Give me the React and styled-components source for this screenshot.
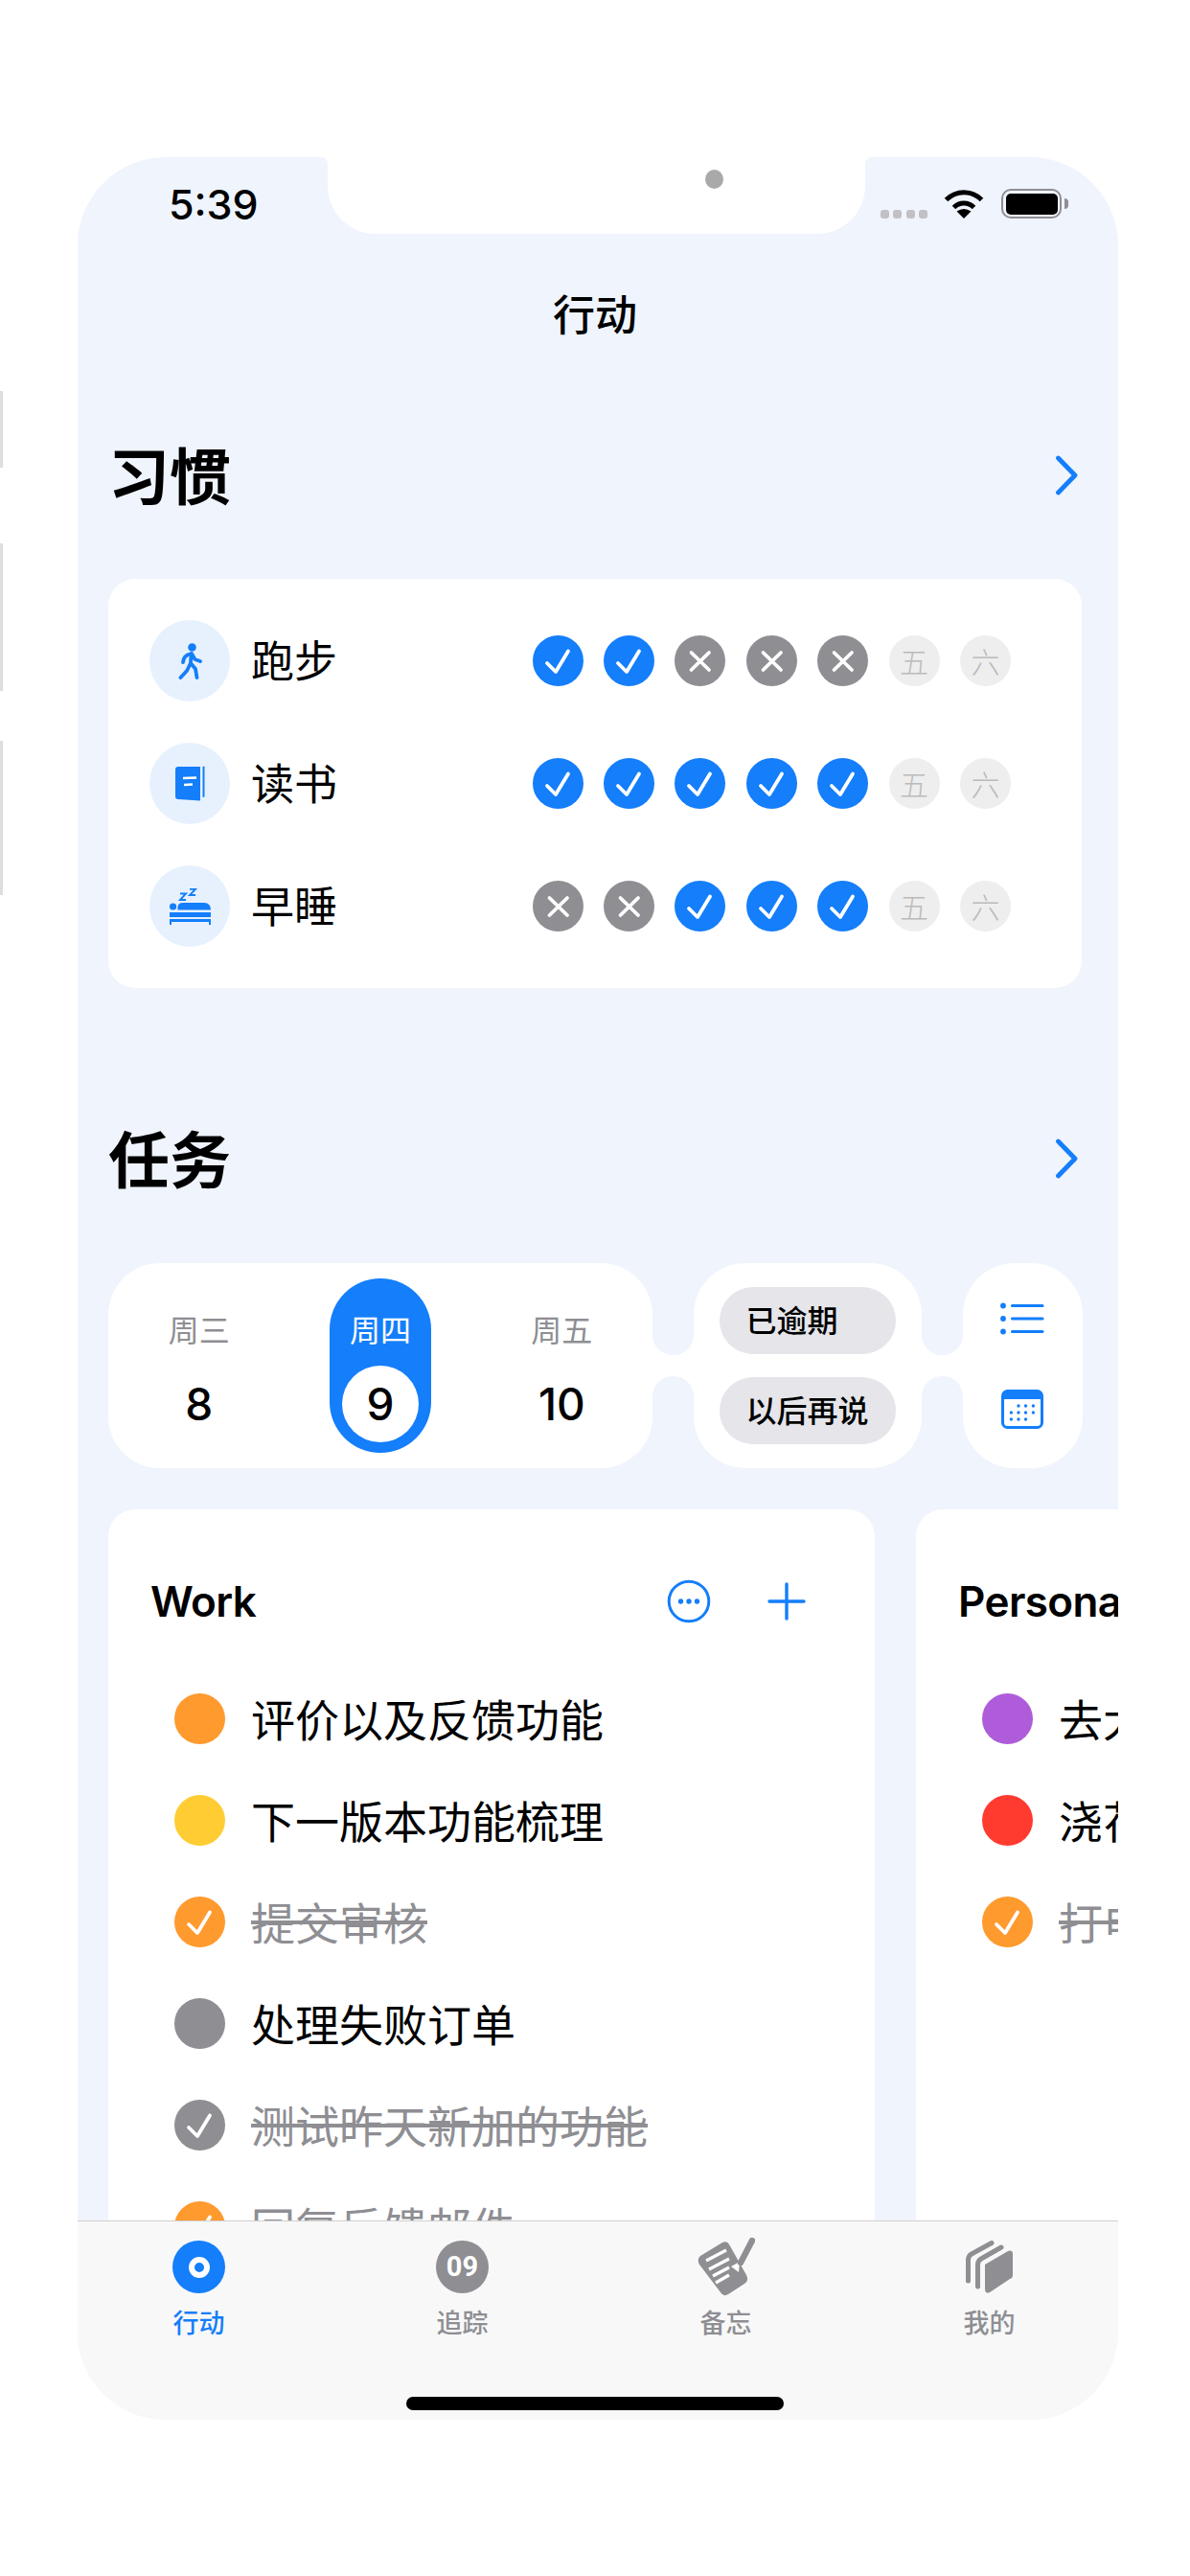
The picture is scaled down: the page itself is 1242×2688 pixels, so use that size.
import React from 'react'
import styled, { createGlobalStyle } from 'styled-components'

const BLUE = '#147EFB'
const GRAY = '#8E8E93'
const BG = '#EFF4FD'

const GlobalStyle = createGlobalStyle`
  html, body {
    margin: 0;
    padding: 0;
    background: #fff;
  }
  body {
    font-family: Inter, "Noto Sans CJK SC", sans-serif;
    color: #000;
  }
  * { box-sizing: border-box; }
`

const Page = styled.div`
  display: flex;
  width: 1242px;
  height: 2688px;
  overflow: hidden;
  background: #fff;
`

const Rail = styled.div`
  width: 81px;
  flex-shrink: 0;
  padding-top: 408px;
  display: flex;
  flex-direction: column;
`

const SideButton = styled.div`
  width: 3px;
  height: ${p => p.$h}px;
  margin-bottom: ${p => p.$gap}px;
  background: #dedede;
`

const Phone = styled.div`
  margin-top: 164px;
  width: 1086px;
  height: 2361px;
  border-radius: 92px;
  overflow: hidden;
  background: ${BG};
  display: flex;
  flex-direction: column;
`

const StatusBar = styled.div`
  height: 80px;
  flex-shrink: 0;
  display: flex;
`

const StatusLeft = styled.div`
  width: 261px;
  padding: 31px 0 0 95px;
  font: 500 43px/36px Inter, sans-serif;
`

const Notch = styled.div`
  position: relative;
  width: 561px;
  height: 80px;
  padding: 13px 0 0 394px;
  background: #fff;
  border-radius: 0 0 50px 50px;

  &::before, &::after {
    content: '';
    position: absolute;
    top: 0;
    width: 8px;
    height: 8px;
  }
  &::before {
    left: -8px;
    background: radial-gradient(circle at 0 100%, transparent 8px, #fff 8.5px);
  }
  &::after {
    right: -8px;
    background: radial-gradient(circle at 100% 100%, transparent 8px, #fff 8.5px);
  }
`

const Camera = styled.div`
  width: 19px;
  height: 20px;
  border-radius: 50%;
  background: #a9a9a9;
`

const StatusRight = styled.div`
  flex: 1;
  padding: 33px 0 0 16px;
  display: flex;
  align-items: flex-start;
`

const SignalDots = styled.div`
  display: flex;
  gap: 4.4px;
  margin: 22px 17px 0 0;
`

const SignalDot = styled.div`
  width: 9px;
  height: 9px;
  border-radius: 3px;
  background: #c0c0c5;
`

const Battery = styled.div`
  margin-left: 18px;
  width: 63px;
  height: 31px;
  padding: 2.5px;
  border: 2.5px solid ${GRAY};
  border-radius: 10px;
`

const BatteryFill = styled.div`
  height: 100%;
  background: #000;
  border-radius: 5px;
`

const BatteryTip = styled.div`
  width: 4px;
  height: 11px;
  margin: 10px 0 0 3px;
  background: ${GRAY};
  border-radius: 0 4px 4px 0;
`

const Content = styled.div`
  flex: 1;
  min-height: 0;
  overflow: hidden;
  padding: 0 38px 0 32px;
`

const NavTitle = styled.div`
  margin-top: 45px;
  height: 80px;
  text-align: center;
  font: 500 44px/74px "Noto Sans CJK SC", sans-serif;
`

const SectionHead = styled.div`
  display: flex;
  align-items: center;
  justify-content: space-between;
  height: 80px;
  margin-top: ${p => p.$top}px;
  padding-right: 4px;
`

const SectionTitle = styled.h2`
  margin: 0 0 6px;
  font: 600 64px/74px "Noto Sans CJK SC", sans-serif;
`

const HabitCard = styled.div`
  margin-top: 68px;
  padding: 43px 74px 43px 43px;
  background: #fff;
  border-radius: 28px;
  display: flex;
  flex-direction: column;
  gap: 43px;
`

const HabitRow = styled.div`
  display: flex;
  align-items: center;
  height: 85px;
`

const HabitIcon = styled.div`
  width: 84px;
  height: 85px;
  border-radius: 50%;
  background: #e7f1fe;
  display: flex;
  align-items: center;
  justify-content: center;
`

const HabitLabel = styled.div`
  margin: 0 0 3px 22px;
  font: 400 45px/60px "Noto Sans CJK SC", sans-serif;
`

const DayRow = styled.div`
  margin-left: auto;
  display: flex;
  gap: 21.4px;
`

const Day = styled.div`
  width: 53px;
  height: 53px;
  border-radius: 50%;
  background: ${p => p.$bg};
  color: #bbb;
  display: flex;
  align-items: center;
  justify-content: center;
  font: 300 30px/53px "Noto Sans CJK SC", sans-serif;
`

const CalendarRow = styled.div`
  margin-top: 69px;
  display: flex;
  height: 214px;
`

const Pill = styled.div`
  width: ${p => p.$w}px;
  flex-shrink: 0;
  background: #fff;
  border-radius: 54px;
`

const DatePill = styled(Pill)`
  display: grid;
  grid-template-columns: repeat(3, 1fr);
`

const DateCol = styled.div`
  display: flex;
  flex-direction: column;
  align-items: center;
`

const DateInner = styled.div`
  width: 106px;
  height: 182px;
  margin-top: 16px;
  padding-top: 34px;
  border-radius: 53px;
  background: ${p => (p.$active ? BLUE : 'transparent')};
  display: flex;
  flex-direction: column;
  align-items: center;
`

const DateLabel = styled.div`
  font: 400 32px/36px "Noto Sans CJK SC", sans-serif;
  color: ${p => (p.$active ? '#fff' : GRAY)};
`

const DateNum = styled.div`
  width: 80px;
  height: 80px;
  margin-top: 21px;
  border-radius: 50%;
  background: ${p => (p.$active ? '#fff' : 'transparent')};
  font: 500 46px/80px Inter, sans-serif;
  text-align: center;
`

const Bridge = styled.div`
  width: 42.5px;
  height: 108px;
  flex-shrink: 0;
  align-self: center;
  background: #fff;
  display: flex;
  flex-direction: column;
  justify-content: space-between;

  &::before, &::after {
    content: '';
    display: block;
    height: 43px;
    background: ${BG};
  }
  &::before { border-radius: 0 0 21px 21px; }
  &::after { border-radius: 21px 21px 0 0; }
`

const FilterPill = styled(Pill)`
  padding: 25px 27px;
  display: flex;
  flex-direction: column;
  justify-content: space-between;
`

const FilterChip = styled.div`
  height: 70px;
  padding-left: 28px;
  border-radius: 35px;
  background: #e5e5ea;
  font: 500 32px/66px "Noto Sans CJK SC", sans-serif;
`

const ViewPill = styled(Pill)`
  padding: 41px 0;
  display: flex;
  flex-direction: column;
  align-items: center;
  justify-content: space-between;
`

const Boards = styled.div`
  margin-top: 43px;
  display: flex;
  gap: 43px;
`

const Board = styled.div`
  width: 800px;
  height: 900px;
  flex-shrink: 0;
  padding-top: 64px;
  background: #fff;
  border-radius: 28px;
`

const BoardHead = styled.div`
  display: flex;
  align-items: center;
  height: 64px;
  padding-left: 44px;
  margin-bottom: 37px;
`

const BoardTitle = styled.div`
  font: 600 44px/64px Inter, sans-serif;
  letter-spacing: -0.6px;
  white-space: nowrap;
`

const BoardActions = styled.div`
  margin-left: auto;
  padding-right: 72px;
  display: flex;
  align-items: center;
  gap: 59px;
`

const Task = styled.div`
  display: flex;
  align-items: center;
  height: 106px;
  padding-left: 69px;
`

const TaskDot = styled.div`
  width: 53px;
  height: 53px;
  flex-shrink: 0;
  border-radius: 50%;
  background: ${p => p.$color};
`

const TaskText = styled.div`
  margin: 0 0 2px 27px;
  font: 400 46px/64px "Noto Sans CJK SC", sans-serif;
  color: ${p => (p.$done ? GRAY : '#000')};
  text-decoration: ${p => (p.$done ? 'line-through' : 'none')};
  white-space: nowrap;
`

const TabBar = styled.div`
  height: 208px;
  flex-shrink: 0;
  overflow: hidden;
  border-top: 1.5px solid #cfcfcf;
  background: #f8f8f8;
`

const Tabs = styled.div`
  display: grid;
  grid-template-columns: repeat(4, 275px);
  margin-left: -11px;
  padding-top: 20px;
`

const Tab = styled.div`
  display: flex;
  flex-direction: column;
  align-items: center;
`

const TabIcon = styled.div`
  height: 55px;
  display: flex;
  align-items: center;
  justify-content: center;
`

const TabLabel = styled.div`
  margin-top: 15px;
  font: 500 27px/30px "Noto Sans CJK SC", sans-serif;
  color: ${p => (p.$active ? BLUE : GRAY)};
`

const TabDisc = styled.div`
  width: 55px;
  height: 55px;
  border-radius: 50%;
  background: ${p => p.$bg};
  color: #fff;
  display: flex;
  align-items: center;
  justify-content: center;
  font: 700 29px/55px Roboto, sans-serif;
`

const TabRing = styled.div`
  width: 22px;
  height: 22px;
  border-radius: 50%;
  border: 6px solid #fff;
`

const HomeBar = styled.div`
  width: 394px;
  height: 14px;
  margin: 63px 0 0 343px;
  border-radius: 7px;
  background: #000;
`

const Check = () => (
  <svg width="53" height="53" viewBox="0 0 53 53" fill="none" stroke="#fff" strokeWidth="3.8" strokeLinecap="round" strokeLinejoin="round">
    <path d="M15 29 L24 38 L37 16.5" />
  </svg>
)

const Cross = () => (
  <svg width="53" height="53" viewBox="0 0 53 53" fill="none" stroke="#fff" strokeWidth="3.8" strokeLinecap="round">
    <path d="M17.5 18 L36 36 M36 18 L17.5 36" />
  </svg>
)

const Chevron = () => (
  <svg width="24" height="42" viewBox="0 0 24 42" fill="none" stroke={BLUE} strokeWidth="4.8" strokeLinecap="round" strokeLinejoin="round">
    <path d="M3.5 3 L21 21 L3.5 39" />
  </svg>
)

const WalkIcon = () => (
  <svg width="25" height="38" viewBox="0 0 25 38" fill="none" stroke={BLUE} strokeWidth="3.8" strokeLinecap="round" strokeLinejoin="round">
    <circle cx="14.5" cy="4.5" r="4.3" fill={BLUE} stroke="none" />
    <path d="M13.5 11 L13 21 M13.5 11 C8 12 5.5 15 5 20 M14 11 L17.5 17 L23 19" />
    <path d="M13 21 L9 29 L2.5 36 M13 21 L18 27 L19.5 36" />
  </svg>
)

const BookIcon = () => (
  <svg width="31" height="38" viewBox="0 0 31 38" fill="none">
    <path d="M3 1 L26 1 L26 36.5 L3 35 Q0 35 0 32 L0 4 Q0 1 3 1 Z" fill={BLUE} />
    <path d="M28.5 1 L30.5 0.5 L30.5 32.5 L28.5 33 Z" fill={BLUE} />
    <path d="M8 13 L22 12.5 M9 20 L18 19.5" stroke="#fff" strokeWidth="2.4" />
  </svg>
)

const BedIcon = () => (
  <svg width="43" height="38" viewBox="0 0 43 38" fill="none">
    <path d="M11 5.5 H17 L11 12 H17 M21 0.8 H27 L21 7 H27" stroke={BLUE} strokeWidth="1.9" />
    <circle cx="3.6" cy="19" r="3.6" fill={BLUE} />
    <path d="M8.5 22.5 L8.5 20 Q8.5 15 14 15 L36 15 Q43 15 43 22.5 Z" fill={BLUE} />
    <rect x="0" y="25" width="43" height="5" fill={BLUE} />
    <path d="M0 32 H43 V38 H41 V35 H2 V38 H0 Z" fill={BLUE} />
  </svg>
)

const ListIcon = () => (
  <svg width="46" height="34" viewBox="0 0 46 34" fill="none">
    <g fill={BLUE}>
      <circle cx="3" cy="3.5" r="2.9" />
      <circle cx="3" cy="17" r="2.9" />
      <circle cx="3" cy="30.5" r="2.9" />
    </g>
    <path d="M12.5 3.5 H44 M12.5 17 H44 M12.5 30.5 H44" stroke={BLUE} strokeWidth="3.2" strokeLinecap="round" />
  </svg>
)

const calendarDots = [
  [18, 17], [25.5, 17], [33.4, 17],
  [10.4, 24], [18, 24], [25.5, 24], [33.4, 24],
  [10.4, 31], [18, 31], [25.5, 31],
]

const CalendarIcon = () => (
  <svg width="44" height="41" viewBox="0 0 44 41" fill="none">
    <rect x="1.5" y="1.5" width="41" height="38" rx="5" fill="#fff" stroke={BLUE} strokeWidth="3" />
    <path d="M1.5 10 V6 Q1.5 1.5 6 1.5 H38 Q42.5 1.5 42.5 6 V10 Z" fill={BLUE} />
    {calendarDots.map(([x, y]) => (
      <circle key={x + '_' + y} cx={x} cy={y} r="1.7" fill={BLUE} />
    ))}
  </svg>
)

const MoreIcon = () => (
  <svg width="46" height="46" viewBox="0 0 46 46" fill="none">
    <circle cx="23" cy="23" r="20.8" stroke={BLUE} strokeWidth="3" />
    <circle cx="14.5" cy="23" r="2.7" fill={BLUE} />
    <circle cx="23" cy="23" r="2.7" fill={BLUE} />
    <circle cx="31.5" cy="23" r="2.7" fill={BLUE} />
  </svg>
)

const PlusIcon = () => (
  <svg width="40" height="40" viewBox="0 0 40 40" fill="none" stroke={BLUE} strokeWidth="3.4" strokeLinecap="round">
    <path d="M20 2 V38 M2 20 H38" />
  </svg>
)

const WifiIcon = () => (
  <svg width="42" height="31" viewBox="0 0 42 31" fill="none" stroke="#000" strokeWidth="5">
    <path d="M2.5 11.5 C13 1 29 1 39.5 11.5" />
    <path d="M10.5 19.5 C16.5 13.5 25.5 13.5 31.5 19.5" />
    <path d="M21 31 L13.5 23.5 Q21 18.5 28.5 23.5 Z" fill="#000" stroke="none" />
  </svg>
)

const NotesIcon = () => (
  <svg width="60" height="61" viewBox="0 0 60 61" fill="none">
    <path d="M3 19 L26 5 Q31 3 33 7 L51 39 Q54 45 49 48 L32 59 Q27 62 24 57 L2 28 Q-1 22 3 19 Z" fill={GRAY} />
    <path d="M9 24 L30 13 M12 33 L33 22 M19 47 L33 39" stroke="#fff" strokeWidth="3.2" />
    <path d="M16 40 L33 31" stroke="#fff" strokeWidth="3.2" />
    <path d="M35 30 L44 25 L43 36 Z" fill="#fff" />
    <path d="M57 3 L45 26" stroke={GRAY} strokeWidth="6.4" strokeLinecap="round" />
  </svg>
)

const StackIcon = () => (
  <svg width="49" height="55" viewBox="0 0 49 55" fill="none">
    <path d="M20 25 L44 11 Q49 9 49 14 V36 Q49 39 46 40 L25 54 Q20 56 20 50 Z" fill={GRAY} />
    <path d="M37 7 L16 19 Q12.5 21 12.5 25 V48" stroke={GRAY} strokeWidth="5" strokeLinecap="round" />
    <path d="M27 2.5 L6 14 Q2.5 16 2.5 20 V42" stroke={GRAY} strokeWidth="5" strokeLinecap="round" />
  </svg>
)

const habits = [
  { name: '跑步', Icon: WalkIcon, days: ['y', 'y', 'n', 'n', 'n'] },
  { name: '读书', Icon: BookIcon, days: ['y', 'y', 'y', 'y', 'y'] },
  { name: '早睡', Icon: BedIcon, days: ['n', 'n', 'y', 'y', 'y'] },
]

const dates = [
  { label: '周三', num: '8' },
  { label: '周四', num: '9', active: true },
  { label: '周五', num: '10' },
]

const boards = [
  {
    title: 'Work',
    tasks: [
      { text: '评价以及反馈功能', color: '#FF9A2E' },
      { text: '下一版本功能梳理', color: '#FFCC33' },
      { text: '提交审核', color: '#FF9A2E', done: true },
      { text: '处理失败订单', color: GRAY },
      { text: '测试昨天新加的功能', color: GRAY, done: true },
      { text: '回复反馈邮件', color: '#FF9A2E', done: true },
    ],
  },
  {
    title: 'Personal',
    tasks: [
      { text: '去大润发', color: '#AF5CDB' },
      { text: '浇花', color: '#FF3B30' },
      { text: '打电话', color: '#FF9A2E', done: true },
    ],
  },
]

function DayMark({ state }) {
  if (state === 'y') return <Day $bg={BLUE}><Check /></Day>
  return <Day $bg={GRAY}><Cross /></Day>
}

export default function App() {
  return (
    <Page>
      <GlobalStyle />
      <Rail>
        <SideButton $h={80} $gap={79} />
        <SideButton $h={154} $gap={52} />
        <SideButton $h={161} $gap={0} />
      </Rail>
      <Phone>
        <StatusBar>
          <StatusLeft>5:39</StatusLeft>
          <Notch><Camera /></Notch>
          <StatusRight>
            <SignalDots>
              <SignalDot /><SignalDot /><SignalDot /><SignalDot />
            </SignalDots>
            <WifiIcon />
            <Battery><BatteryFill /></Battery>
            <BatteryTip />
          </StatusRight>
        </StatusBar>
        <Content>
          <NavTitle>行动</NavTitle>

          <SectionHead $top={87}>
            <SectionTitle>习惯</SectionTitle>
            <Chevron />
          </SectionHead>
          <HabitCard>
            {habits.map(({ name, Icon, days }) => (
              <HabitRow key={name}>
                <HabitIcon><Icon /></HabitIcon>
                <HabitLabel>{name}</HabitLabel>
                <DayRow>
                  {days.map((d, i) => <DayMark key={i} state={d} />)}
                  <Day $bg="#eeeeee">五</Day>
                  <Day $bg="#eeeeee">六</Day>
                </DayRow>
              </HabitRow>
            ))}
          </HabitCard>

          <SectionHead $top={138}>
            <SectionTitle>任务</SectionTitle>
            <Chevron />
          </SectionHead>
          <CalendarRow>
            <DatePill $w={568}>
              {dates.map(d => (
                <DateCol key={d.num}>
                  <DateInner $active={d.active}>
                    <DateLabel $active={d.active}>{d.label}</DateLabel>
                    <DateNum $active={d.active}>{d.num}</DateNum>
                  </DateInner>
                </DateCol>
              ))}
            </DatePill>
            <Bridge />
            <FilterPill $w={238.5}>
              <FilterChip>已逾期</FilterChip>
              <FilterChip>以后再说</FilterChip>
            </FilterPill>
            <Bridge />
            <ViewPill $w={125}>
              <ListIcon />
              <CalendarIcon />
            </ViewPill>
          </CalendarRow>

          <Boards>
            {boards.map((b, i) => (
              <Board key={b.title}>
                <BoardHead>
                  <BoardTitle>{b.title}</BoardTitle>
                  {i === 0 && (
                    <BoardActions>
                      <MoreIcon />
                      <PlusIcon />
                    </BoardActions>
                  )}
                </BoardHead>
                {b.tasks.map(t => (
                  <Task key={t.text}>
                    <TaskDot $color={t.color}>{t.done && <Check />}</TaskDot>
                    <TaskText $done={t.done}>{t.text}</TaskText>
                  </Task>
                ))}
              </Board>
            ))}
          </Boards>
        </Content>
        <TabBar>
          <Tabs>
            <Tab>
              <TabIcon><TabDisc $bg={BLUE}><TabRing /></TabDisc></TabIcon>
              <TabLabel $active>行动</TabLabel>
            </Tab>
            <Tab>
              <TabIcon><TabDisc $bg={GRAY}>09</TabDisc></TabIcon>
              <TabLabel>追踪</TabLabel>
            </Tab>
            <Tab>
              <TabIcon><NotesIcon /></TabIcon>
              <TabLabel>备忘</TabLabel>
            </Tab>
            <Tab>
              <TabIcon><StackIcon /></TabIcon>
              <TabLabel>我的</TabLabel>
            </Tab>
          </Tabs>
          <HomeBar />
        </TabBar>
      </Phone>
    </Page>
  )
}
